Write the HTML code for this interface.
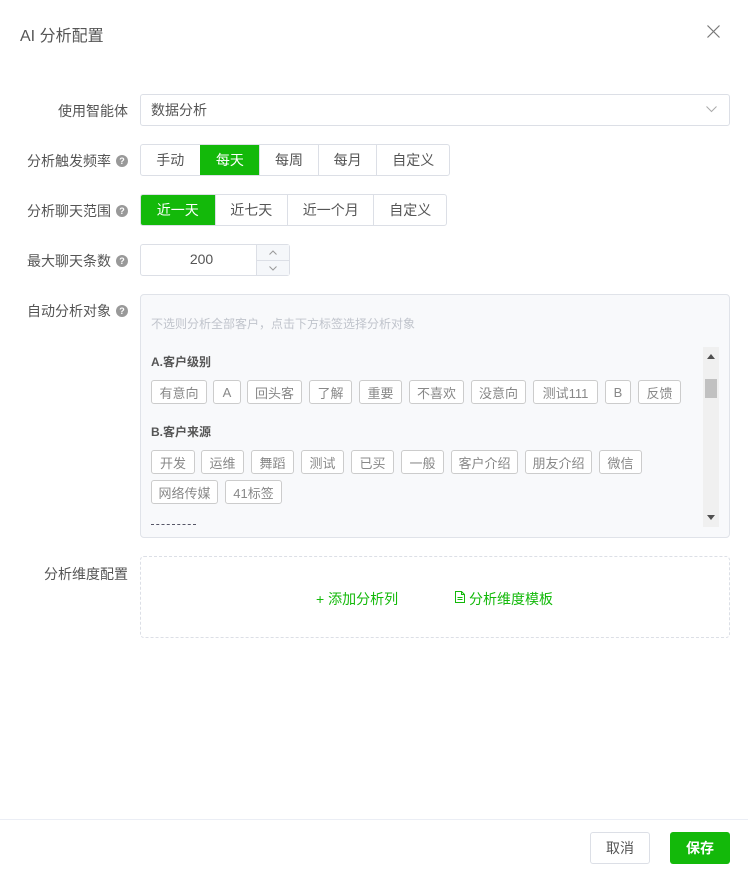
<!DOCTYPE html>
<html><head><meta charset="utf-8">
<style>
*{box-sizing:border-box;margin:0;padding:0}
body{width:748px;height:872px;background:#fff;font-family:"Liberation Sans","Noto Sans CJK SC",sans-serif;font-size:13px;color:#555;position:relative;overflow:hidden}
.a{position:absolute}
.lbl{position:absolute;right:620px;font-size:14px;color:#555;white-space:nowrap;display:flex;align-items:center}
.q{display:inline-block;width:12px;height:12px;border-radius:50%;background:#999;color:#fff;font-size:9px;line-height:12px;text-align:center;font-weight:bold;margin-left:5px}
.seg{position:absolute;display:flex;border:1px solid #dcdfe6;border-radius:3px;overflow:hidden;height:32px}
.seg div{display:flex;align-items:center;justify-content:center;border-left:1px solid #dcdfe6;color:#555;font-size:14px}
.seg div:first-child{border-left:none}
.seg .on{background:#13b90a;color:#fff;border-color:#13b90a}
.tag{position:absolute;height:24px;border:1px solid #ccc;border-radius:3px;font-size:13px;color:#888;display:flex;align-items:center;justify-content:center;background:#fff}
.h{position:absolute;font-size:12px;font-weight:bold;color:#555}
</style></head><body>
<div class="a" style="left:20px;top:22px;font-size:16px;color:#555">AI 分析配置</div>
<svg class="a" style="left:707px;top:25px" width="13" height="13"><path d="M0.5 0.5L12.5 12.5M12.5 0.5L0.5 12.5" stroke="#777" stroke-width="1.2"/></svg>

<div class="lbl" style="top:101px">使用智能体</div>
<div class="a" style="left:140px;top:94px;width:590px;height:32px;border:1px solid #dcdfe6;border-radius:3px;padding-left:10px;line-height:30px;color:#555;font-size:14px">数据分析</div>
<svg class="a" style="left:706px;top:106px" width="11" height="7"><path d="M0.5 0.5L5.5 5.5L10.5 0.5" stroke="#aaa" fill="none"/></svg>

<div class="lbl" style="top:151px">分析触发频率<span class="q">?</span></div>
<div class="seg" style="left:140px;top:144px;width:310px">
<div style="width:59px">手动</div><div class="on" style="width:60px">每天</div><div style="width:59px">每周</div><div style="width:59px">每月</div><div style="width:73px">自定义</div></div>

<div class="lbl" style="top:201px">分析聊天范围<span class="q">?</span></div>
<div class="seg" style="left:140px;top:194px;width:307px">
<div class="on" style="width:74px">近一天</div><div style="width:73px">近七天</div><div style="width:87px">近一个月</div><div style="width:73px">自定义</div></div>

<div class="lbl" style="top:251px">最大聊天条数<span class="q">?</span></div>
<div class="a" style="left:140px;top:244px;width:150px;height:32px;border:1px solid #dcdfe6;border-radius:3px"></div>
<div class="a" style="left:143px;top:251px;width:117px;text-align:center;font-size:14px;color:#555">200</div>
<div class="a" style="left:256px;top:245px;width:33px;height:30px;background:#f5f7fa;border-left:1px solid #dcdfe6"></div>
<div class="a" style="left:256px;top:260px;width:33px;height:1px;background:#dcdfe6"></div>
<svg class="a" style="left:269px;top:250px" width="8" height="5"><path d="M0.5 4.5L4 1L7.5 4.5" stroke="#999" fill="none"/></svg>
<svg class="a" style="left:269px;top:266px" width="8" height="5"><path d="M0.5 0.5L4 4L7.5 0.5" stroke="#999" fill="none"/></svg>

<div class="lbl" style="top:301px">自动分析对象<span class="q">?</span></div>
<div class="a" style="left:140px;top:294px;width:590px;height:244px;border:1px solid #e0e3e9;border-radius:4px;background:#f8f9fb;overflow:hidden">
<div class="a" style="left:10px;top:20px;font-size:12px;color:#c0c4cc">不选则分析全部客户，点击下方标签选择分析对象</div>
<div class="h" style="left:10px;top:58px">A.客户级别</div>
<div class="h" style="left:10px;top:128px">B.客户来源</div>
<div class="a" style="left:10px;top:229px;width:45px;border-top:1px dashed #556"></div>
<div class="a" style="left:562px;top:52px;width:16px;height:180px;background:#f0f0f0"></div>
<div class="a" style="left:564px;top:84px;width:12px;height:19px;background:#c1c1c1"></div>
<svg class="a" style="left:566px;top:59px" width="8" height="5"><path d="M0 5L4 0L8 5Z" fill="#505050"/></svg>
<svg class="a" style="left:566px;top:220px" width="8" height="5"><path d="M0 0L4 5L8 0Z" fill="#505050"/></svg>
</div>
<!-- row 1 -->
<div class="tag" style="left:151px;top:380px;width:56px">有意向</div>
<div class="tag" style="left:213px;top:380px;width:28px">A</div>
<div class="tag" style="left:247px;top:380px;width:55px">回头客</div>
<div class="tag" style="left:309px;top:380px;width:43px">了解</div>
<div class="tag" style="left:359px;top:380px;width:43px">重要</div>
<div class="tag" style="left:409px;top:380px;width:55px">不喜欢</div>
<div class="tag" style="left:471px;top:380px;width:55px">没意向</div>
<div class="tag" style="left:533px;top:380px;width:65px">测试111</div>
<div class="tag" style="left:605px;top:380px;width:26px">B</div>
<div class="tag" style="left:638px;top:380px;width:43px">反馈</div>
<!-- row 2 -->
<div class="tag" style="left:151px;top:450px;width:44px">开发</div>
<div class="tag" style="left:201px;top:450px;width:43px">运维</div>
<div class="tag" style="left:251px;top:450px;width:43px">舞蹈</div>
<div class="tag" style="left:301px;top:450px;width:43px">测试</div>
<div class="tag" style="left:351px;top:450px;width:43px">已买</div>
<div class="tag" style="left:401px;top:450px;width:43px">一般</div>
<div class="tag" style="left:451px;top:450px;width:67px">客户介绍</div>
<div class="tag" style="left:525px;top:450px;width:67px">朋友介绍</div>
<div class="tag" style="left:599px;top:450px;width:43px">微信</div>
<div class="tag" style="left:151px;top:480px;width:67px">网络传媒</div>
<div class="tag" style="left:225px;top:480px;width:57px">41标签</div>

<div class="lbl" style="top:564px">分析维度配置</div>
<div class="a" style="left:140px;top:556px;width:590px;height:82px;border:1px dashed #dcdfe6;border-radius:4px"></div>
<div class="a" style="left:316px;top:589px;color:#13b90a;font-size:14px">+ 添加分析列</div>
<svg class="a" style="left:455px;top:591px" width="10" height="12"><path d="M0.5 0.5H6.5L9.5 3.5V11.5H0.5Z M6.5 0.5V3.5H9.5 M2.5 6.5H7.5 M2.5 8.5H7.5" stroke="#13b90a" fill="none"/></svg>
<div class="a" style="left:469px;top:589px;color:#13b90a;font-size:14px">分析维度模板</div>

<div class="a" style="left:0;top:819px;width:748px;height:1px;background:#ebeef5"></div>
<div class="a" style="left:590px;top:832px;width:60px;height:32px;border:1px solid #dcdfe6;border-radius:3px;line-height:30px;text-align:center;color:#555;font-size:14px">取消</div>
<div class="a" style="left:670px;top:832px;width:60px;height:32px;background:#13b90a;border-radius:3px;line-height:32px;text-align:center;color:#fff;font-weight:bold;font-size:14px">保存</div>
</body></html>
